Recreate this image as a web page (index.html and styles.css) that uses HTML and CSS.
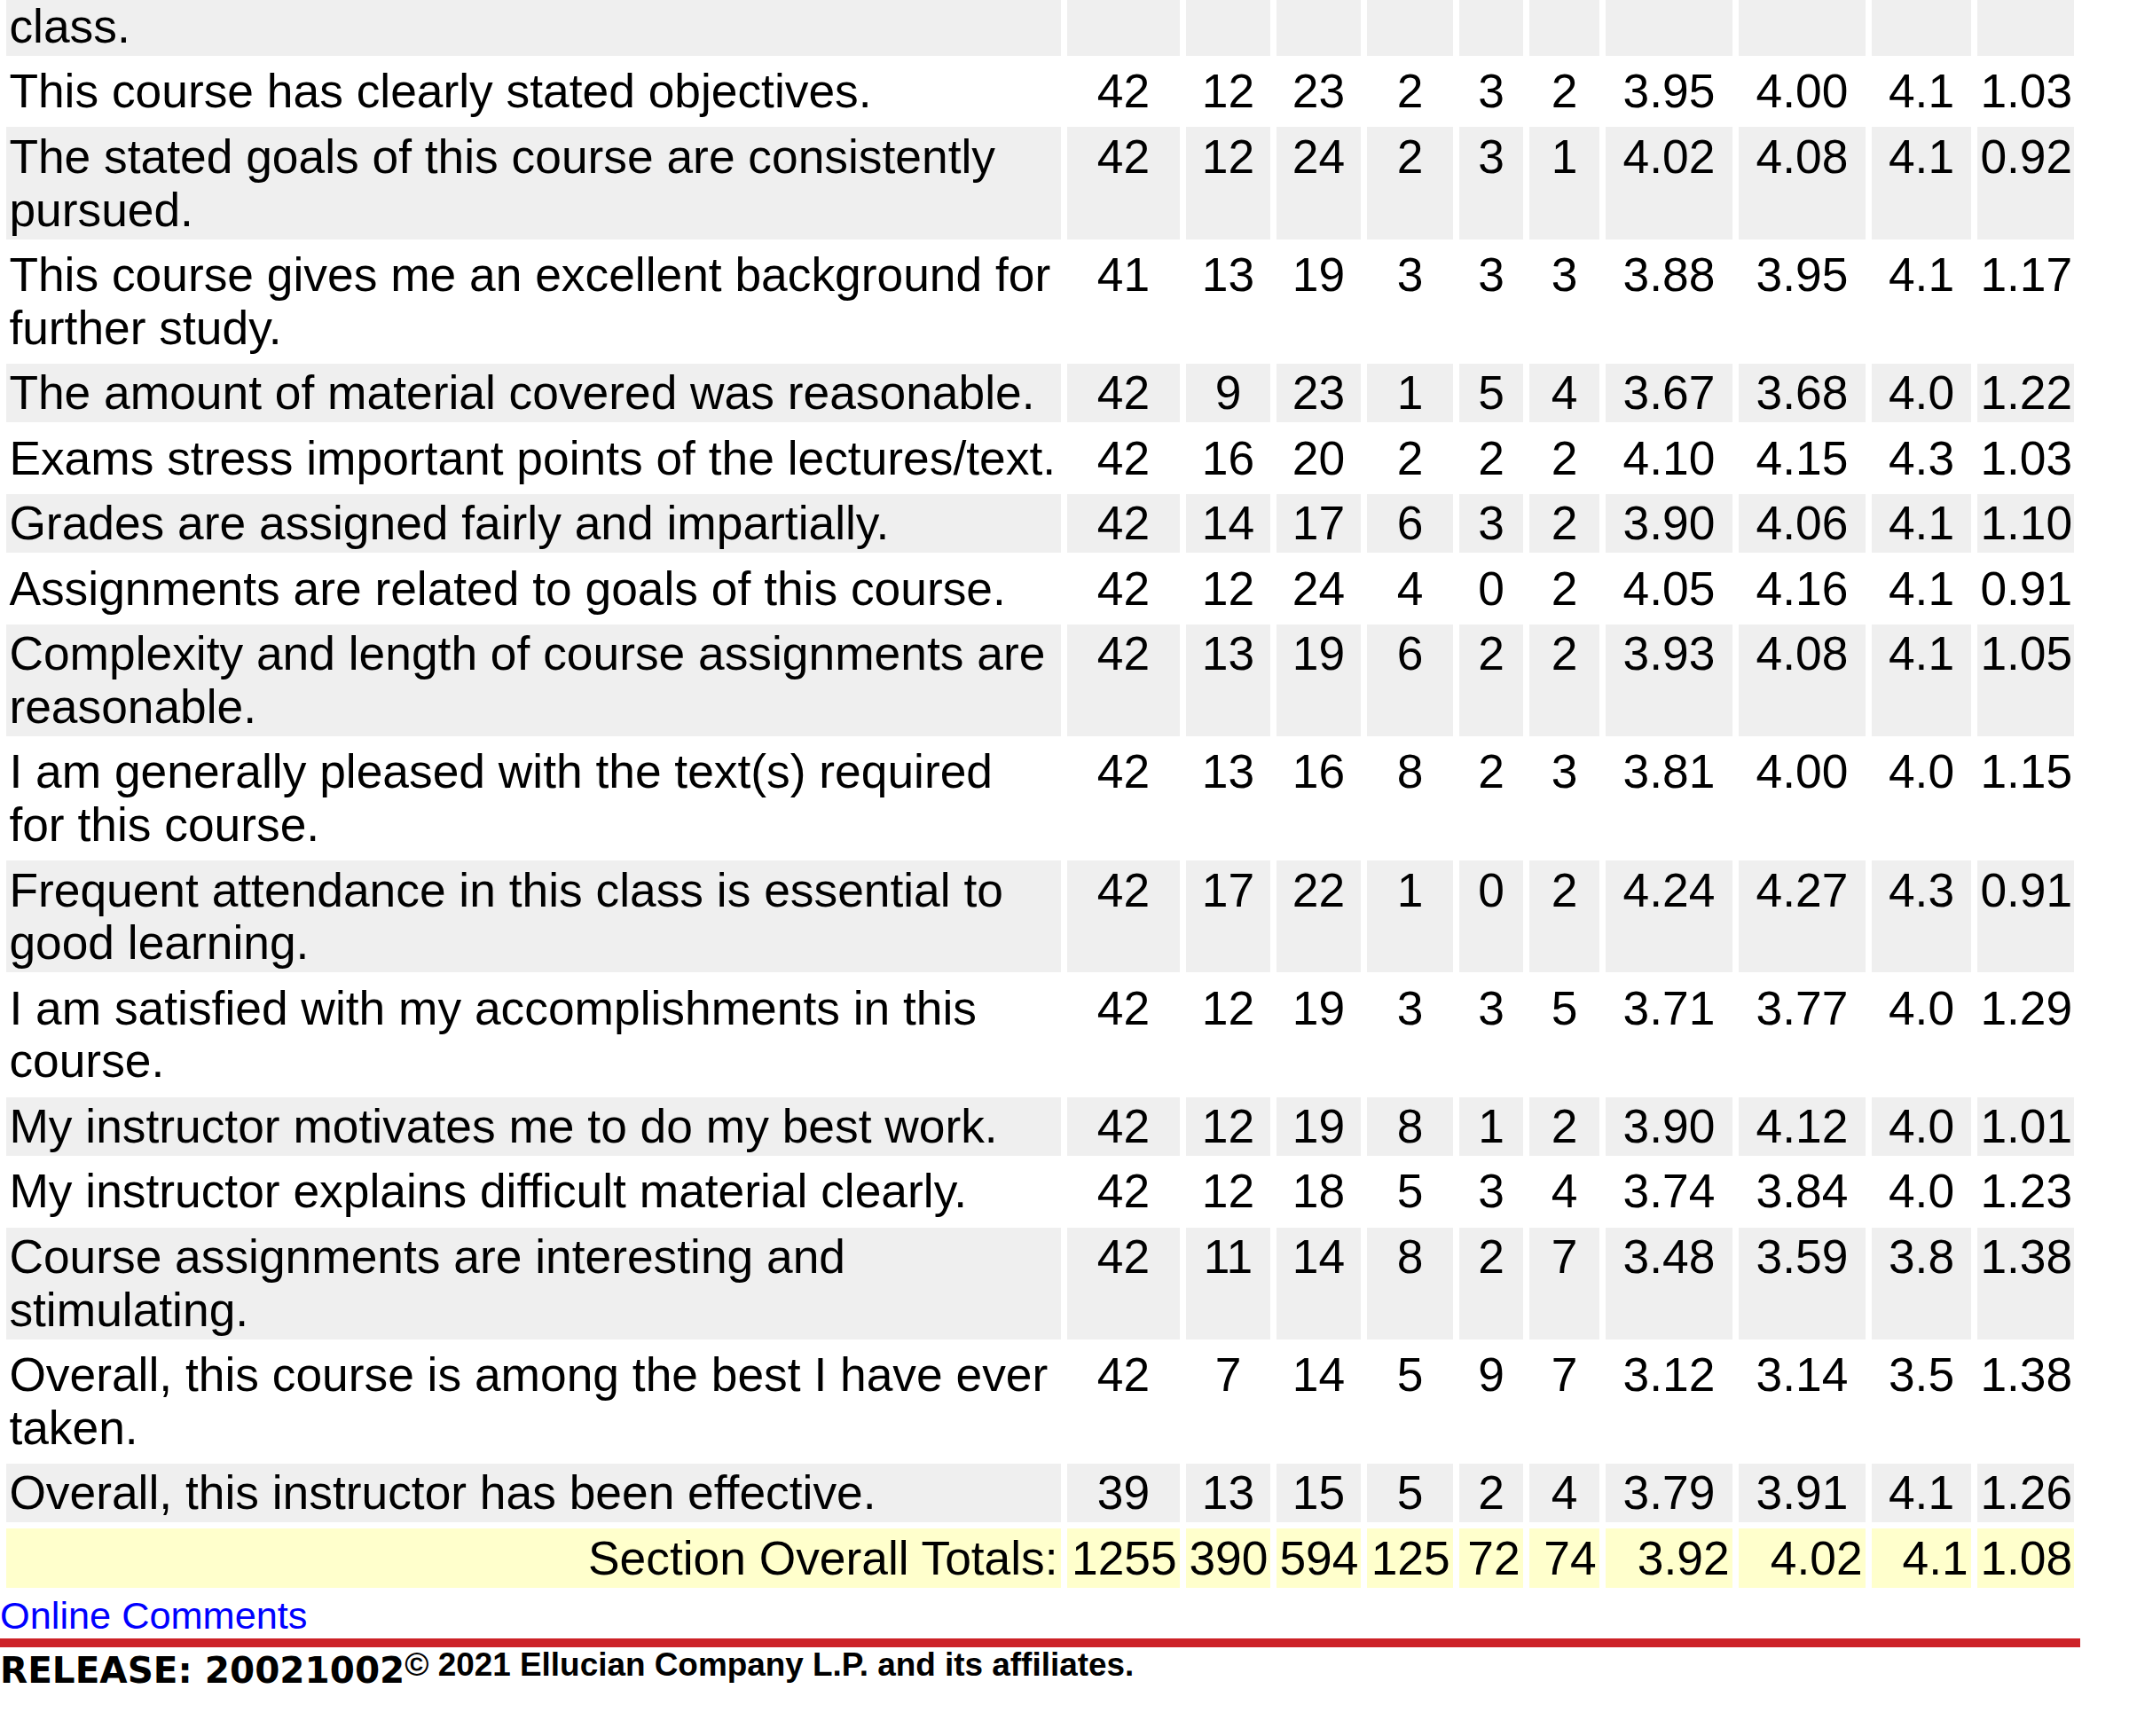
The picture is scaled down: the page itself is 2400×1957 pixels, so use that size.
FILE: index.html
```html
<!DOCTYPE html>
<html lang="en">
<head>
<meta charset="utf-8">
<title>Course Evaluation Results</title>
<link rel="stylesheet" href="styles.css">
</head>
<body>
<table class="results">
  <colgroup>
    <col class="c-q"><col class="c-n"><col class="c-a"><col class="c-b"><col class="c-c"><col class="c-d"><col class="c-e"><col class="c-m"><col class="c-m2"><col class="c-s"><col class="c-sd">
  </colgroup>
  <tbody>
    <tr class="shade"><td class="q">class.</td><td></td><td></td><td></td><td></td><td></td><td></td><td></td><td></td><td></td><td></td></tr>
    <tr><td class="q">This course has clearly stated objectives.</td><td>42</td><td>12</td><td>23</td><td>2</td><td>3</td><td>2</td><td>3.95</td><td>4.00</td><td>4.1</td><td>1.03</td></tr>
    <tr class="shade"><td class="q">The stated goals of this course are consistently pursued.</td><td>42</td><td>12</td><td>24</td><td>2</td><td>3</td><td>1</td><td>4.02</td><td>4.08</td><td>4.1</td><td>0.92</td></tr>
    <tr><td class="q">This course gives me an excellent background for further study.</td><td>41</td><td>13</td><td>19</td><td>3</td><td>3</td><td>3</td><td>3.88</td><td>3.95</td><td>4.1</td><td>1.17</td></tr>
    <tr class="shade"><td class="q">The amount of material covered was reasonable.</td><td>42</td><td>9</td><td>23</td><td>1</td><td>5</td><td>4</td><td>3.67</td><td>3.68</td><td>4.0</td><td>1.22</td></tr>
    <tr><td class="q">Exams stress important points of the lectures/text.</td><td>42</td><td>16</td><td>20</td><td>2</td><td>2</td><td>2</td><td>4.10</td><td>4.15</td><td>4.3</td><td>1.03</td></tr>
    <tr class="shade"><td class="q">Grades are assigned fairly and impartially.</td><td>42</td><td>14</td><td>17</td><td>6</td><td>3</td><td>2</td><td>3.90</td><td>4.06</td><td>4.1</td><td>1.10</td></tr>
    <tr><td class="q">Assignments are related to goals of this course.</td><td>42</td><td>12</td><td>24</td><td>4</td><td>0</td><td>2</td><td>4.05</td><td>4.16</td><td>4.1</td><td>0.91</td></tr>
    <tr class="shade"><td class="q">Complexity and length of course assignments are reasonable.</td><td>42</td><td>13</td><td>19</td><td>6</td><td>2</td><td>2</td><td>3.93</td><td>4.08</td><td>4.1</td><td>1.05</td></tr>
    <tr><td class="q">I am generally pleased with the text(s) required for this course.</td><td>42</td><td>13</td><td>16</td><td>8</td><td>2</td><td>3</td><td>3.81</td><td>4.00</td><td>4.0</td><td>1.15</td></tr>
    <tr class="shade"><td class="q">Frequent attendance in this class is essential to good learning.</td><td>42</td><td>17</td><td>22</td><td>1</td><td>0</td><td>2</td><td>4.24</td><td>4.27</td><td>4.3</td><td>0.91</td></tr>
    <tr><td class="q">I am satisfied with my accomplishments in this course.</td><td>42</td><td>12</td><td>19</td><td>3</td><td>3</td><td>5</td><td>3.71</td><td>3.77</td><td>4.0</td><td>1.29</td></tr>
    <tr class="shade"><td class="q">My instructor motivates me to do my best work.</td><td>42</td><td>12</td><td>19</td><td>8</td><td>1</td><td>2</td><td>3.90</td><td>4.12</td><td>4.0</td><td>1.01</td></tr>
    <tr><td class="q">My instructor explains difficult material clearly.</td><td>42</td><td>12</td><td>18</td><td>5</td><td>3</td><td>4</td><td>3.74</td><td>3.84</td><td>4.0</td><td>1.23</td></tr>
    <tr class="shade"><td class="q">Course assignments are interesting and stimulating.</td><td>42</td><td>11</td><td>14</td><td>8</td><td>2</td><td>7</td><td>3.48</td><td>3.59</td><td>3.8</td><td>1.38</td></tr>
    <tr><td class="q">Overall, this course is among the best I have ever taken.</td><td>42</td><td>7</td><td>14</td><td>5</td><td>9</td><td>7</td><td>3.12</td><td>3.14</td><td>3.5</td><td>1.38</td></tr>
    <tr class="shade"><td class="q">Overall, this instructor has been effective.</td><td>39</td><td>13</td><td>15</td><td>5</td><td>2</td><td>4</td><td>3.79</td><td>3.91</td><td>4.1</td><td>1.26</td></tr>
    <tr class="totals"><td class="q">Section Overall Totals:</td><td>1255</td><td>390</td><td>594</td><td>125</td><td>72</td><td>74</td><td>3.92</td><td>4.02</td><td>4.1</td><td>1.08</td></tr>
  </tbody>
</table>
<div class="links"><a class="comments" href="#">Online Comments</a></div>
<div class="rule"></div>
<div class="release">RELEASE: 20021002<span class="copy">© 2021 Ellucian Company L.P. and its affiliates.</span></div>
</body>
</html>
```
FILE: styles.css
```css
body {
  margin: 0;
  background: #ffffff;
  color: #000000;
  font-family: "Liberation Sans", Arial, sans-serif;
}

.results {
  border-collapse: separate;
  border-spacing: 7px;
  table-layout: fixed;
  width: 2345px;
  margin-top: -10.5px;
  font-size: 53.33px;
  line-height: 59.7px;
}

.results td {
  box-sizing: border-box;
  padding: 3.4px;
  vertical-align: top;
  text-align: center;
  white-space: nowrap;
}

.results td.q {
  text-align: left;
  white-space: normal;
}

.c-q { width: 1189px; }
.c-n { width: 127px; }
.c-a { width: 95px; }
.c-b { width: 95px; }
.c-c { width: 97px; }
.c-d { width: 72px; }
.c-e { width: 79px; }
.c-m { width: 143px; }
.c-m2 { width: 143px; }
.c-s { width: 112px; }
.c-sd { width: 109px; }

.shade td {
  background: #efefef;
}

.totals td {
  background: #ffffcc;
  text-align: right;
}

.totals td.q {
  text-align: right;
}

.links {
  font-size: 43.3px;
  line-height: 49px;
}

.comments {
  color: #0000ff;
  text-decoration: none;
}

.rule {
  width: 2345px;
  height: 10px;
  margin-top: 1px;
  background: #cd2228;
}

.release {
  margin-top: 3px;
  font-family: "DejaVu Sans", Verdana, sans-serif;
  font-weight: bold;
  font-size: 40.5px;
  line-height: 47px;
}

.copy {
  font-family: "Liberation Sans", Arial, sans-serif;
  font-size: 36.9px;
  line-height: 30px;
  vertical-align: 8px;
}
```
